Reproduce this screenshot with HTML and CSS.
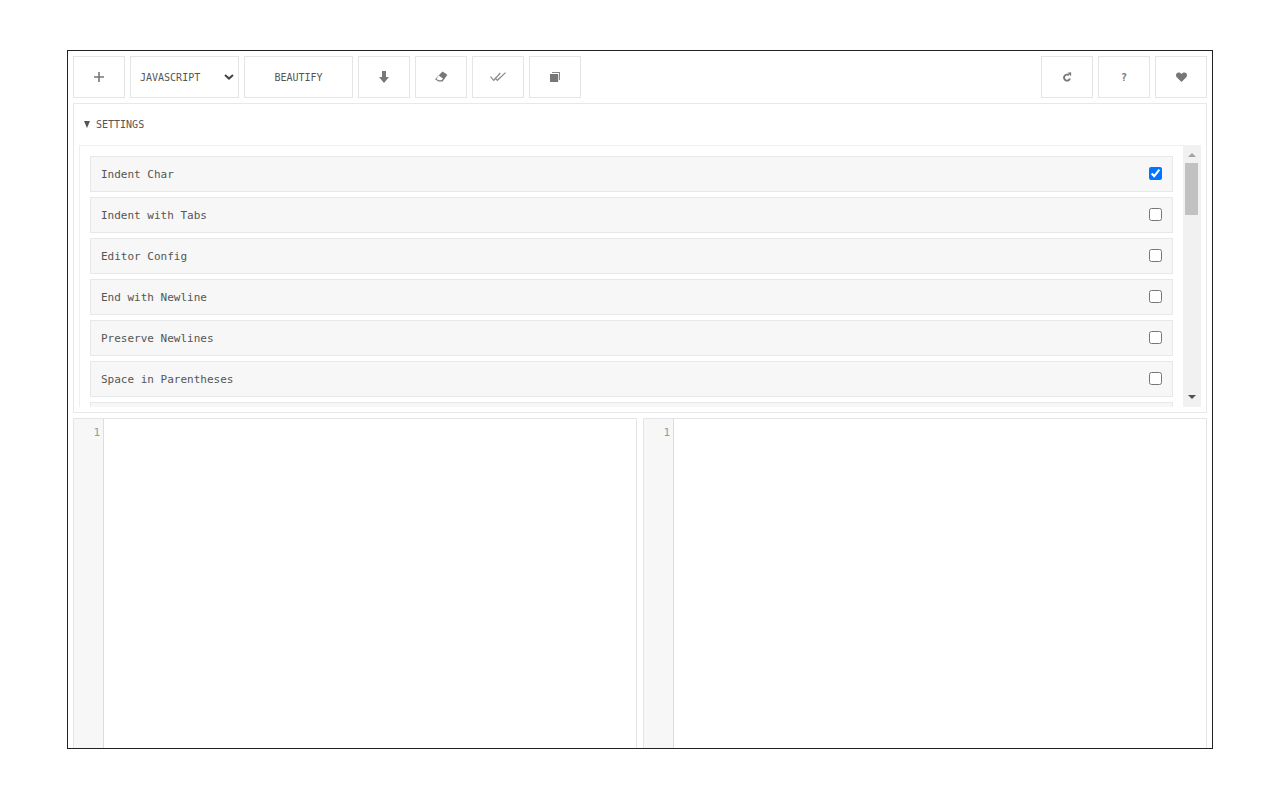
FILE: index.html
```html
<!DOCTYPE html>
<html lang="en">
<head>
<meta charset="utf-8">
<title>Beautifier</title>
<link rel="stylesheet" href="styles.css">
</head>
<body>
<main class="app">
  <div class="toolbar">
    <button class="btn" aria-label="New"><svg class="icon" width="12" height="12" viewBox="0 0 12 12"><path d="M5.200 1h1.600v4.200H11v1.600H6.800V11H5.200V6.800H1V5.200h4.200z" fill="#777"/></svg></button>
    <select class="btn wide lang"><option>JAVASCRIPT</option></select>
    <button class="btn wide label">BEAUTIFY</button>
    <button class="btn" aria-label="Download"><svg class="icon" width="12" height="12" viewBox="0 0 12 12"><path d="M4 0h4v6h3L6 12 1 6h3z" fill="#777"/></svg></button>
    <button class="btn" aria-label="Clear"><svg class="icon" width="14" height="12" viewBox="0 0 14 12"><path d="M8.500 .6 13.400 3.800 8.600 10.400H4.500L1 8.200z" fill="#777"/><path d="M4.800 4.600 9 7.400 7.600 9.300H4.800L2.400 7.900z" fill="#fff"/></svg></button>
    <button class="btn" aria-label="Validate"><svg class="icon" width="16" height="10" viewBox="0 0 16 10"><path d="M.4 4.600 3.800 8.300 10.300 1M4.800 5.600 7.400 8.300 15.500.6" fill="none" stroke="#888" stroke-width="1.200"/></svg></button>
    <button class="btn" aria-label="Copy"><svg class="icon" width="10" height="10" viewBox="0 0 10 10"><path d="M2 0h8v8H9V1H2z" fill="#888"/><path d="M0 2h8.200v8H0z" fill="#777"/></svg></button>
    <div class="spacer"></div>
    <button class="btn" aria-label="Reset"><svg class="icon" width="9" height="10" viewBox="0 0 9 10"><path d="M5.800 3.200A3 3 0 1 0 6.900 6.500" fill="none" stroke="#777" stroke-width="1.900"/><path d="M4.500 .8 8.100 .2V4.300z" fill="#777"/></svg></button>
    <button class="btn help">?</button>
    <button class="btn" aria-label="Like"><svg class="icon" width="11" height="10" viewBox="0 0 11 10"><path d="M5.500 10 .7 5.200C-.8 3.400.3.500 2.700.5c1.300 0 2.200.7 2.800 1.600C6.100 1.200 7 .5 8.300.5c2.400 0 3.500 2.900 2 4.700z" fill="#777"/></svg></button>
  </div>

  <section class="settings">
    <div class="summary"><span class="caret"></span><span>SETTINGS</span></div>
    <div class="settings-body">
      <div class="option-list">
        <label class="option"><span>Indent Char</span><input type="checkbox" checked></label>
        <label class="option"><span>Indent with Tabs</span><input type="checkbox"></label>
        <label class="option"><span>Editor Config</span><input type="checkbox"></label>
        <label class="option"><span>End with Newline</span><input type="checkbox"></label>
        <label class="option"><span>Preserve Newlines</span><input type="checkbox"></label>
        <label class="option"><span>Space in Parentheses</span><input type="checkbox"></label>
        <div class="option"></div>
      </div>
      <div class="scrollbar">
        <span class="arrow up"></span>
        <span class="thumb"></span>
        <span class="track"></span>
        <span class="arrow down"></span>
      </div>
    </div>
  </section>

  <div class="editors">
    <div class="editor"><div class="gutter">1</div><div class="code"></div></div>
    <div class="editor"><div class="gutter">1</div><div class="code"></div></div>
  </div>
</main>
</body>
</html>
```
FILE: styles.css
```css
* { box-sizing: border-box; }
html, body { height: 100%; }
body {
  margin: 0;
  padding: 50px 67px 51px;
  background: #fff;
  overflow: hidden;
  font-family: "DejaVu Sans Mono", monospace;
  color: #555;
}
.app {
  height: 699px;
  border: 1px solid #222;
  padding: 5px 5px 0;
  display: flex;
  flex-direction: column;
  gap: 5px;
  overflow: hidden;
}
.toolbar { display: flex; gap: 5px; height: 42px; flex: none; }
.spacer { flex: 1; }
.btn {
  width: 52px;
  height: 42px;
  padding: 0;
  background: #fff;
  border: 1px solid #e5e5e5;
  border-radius: 0;
  font-family: "DejaVu Sans Mono", monospace;
  font-size: 10px;
  color: #555;
  display: flex;
  align-items: center;
  justify-content: center;
}
.wide { width: 109px; }
.lang {
  display: block;
  padding-left: 9px;
  outline: none;
  appearance: none;
  background: #fff url("data:image/svg+xml,%3Csvg xmlns='http://www.w3.org/2000/svg' width='10' height='6' viewBox='0 0 10 6'%3E%3Cpath d='M1 1l4 3.600L9 1' fill='none' stroke='%23444' stroke-width='2'/%3E%3C/svg%3E") no-repeat 93px 17px;
}
.help { font-weight: 700; color: #777; }
.icon { display: block; }

.settings {
  height: 310px;
  flex: none;
  border: 1px solid #e8e8e8;
  padding: 0 5px 5px;
  display: flex;
  flex-direction: column;
}
.summary {
  height: 41px;
  flex: none;
  display: flex;
  align-items: center;
  gap: 6px;
  padding-left: 5px;
  font-size: 10px;
  color: #555;
}
.caret {
  width: 0;
  height: 0;
  border-left: 3.500px solid transparent;
  border-right: 3.500px solid transparent;
  border-top: 7px solid #555;
}
.settings-body {
  flex: 1;
  min-height: 0;
  display: flex;
  border: 1px solid #f0f0f0;
  border-right: 0;
  border-bottom: 0;
}
.option-list {
  flex: 1;
  min-width: 0;
  overflow: hidden;
  padding: 10px 10px 0;
  display: flex;
  flex-direction: column;
  gap: 5px;
}
.option {
  flex: none;
  height: 36px;
  background: #f7f7f7;
  border: 1px solid #e8e8e8;
  padding: 0 10px;
  display: flex;
  align-items: center;
  justify-content: space-between;
  font-size: 11px;
  color: #555;
}
.option input { margin: 0 0 1px; width: 13px; height: 13px; }
.scrollbar {
  width: 18px;
  flex: none;
  background: #f1f1f1;
  display: flex;
  flex-direction: column;
  align-items: center;
}
.arrow { flex: none; width: 0; height: 0; border-left: 4px solid transparent; border-right: 4px solid transparent; }
.arrow.up { margin-top: 7px; margin-bottom: 6px; border-bottom: 4px solid #a3a3a3; }
.arrow.down { margin-bottom: 8px; margin-top: 6px; border-top: 4px solid #505050; }
.thumb { flex: none; width: 13px; height: 52px; margin-right: 1px; background: #c1c1c1; }
.track { flex: 1; }

.editors { flex: 1; min-height: 0; display: flex; gap: 6px; }
.editor {
  flex: 1;
  min-width: 0;
  height: 400px;
  border: 1px solid #e5e5e5;
  display: flex;
}
.gutter {
  width: 30px;
  flex: none;
  background: #f7f7f7;
  border-right: 1px solid #ddd;
  padding: 7px 3px 0 0;
  text-align: right;
  font-size: 11px;
  line-height: 14px;
  color: #999;
}
.code { flex: 1; background: #fff; }
```
